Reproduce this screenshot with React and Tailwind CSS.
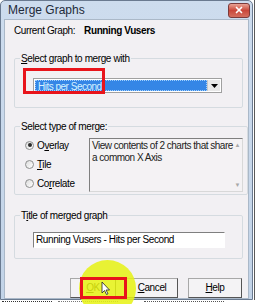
import { X } from "lucide-react";

function Radio({ checked, label }) {
    return (
        <label className="flex items-center gap-[3px] h-[14px]">
            <span className="w-[9px] h-[9px] rounded-full border border-[#8e8f8f] bg-gradient-to-br from-[#dcdcdc] to-white flex items-center justify-center">
                {checked && <span className="w-[4px] h-[4px] rounded-full bg-[#2b2b2b]" />}
            </span>
            <span>{label}</span>
        </label>
    );
}

function Button({ children }) {
    return (
        <button className="h-[20px] border border-[#a8a8a8] border-r-[#555] border-b-[#555] bg-[#f4f3f5] text-[10px] leading-none">
            {children}
        </button>
    );
}

export default function App() {
    return (
        <div
            className="relative w-[257px] h-[304px] overflow-hidden bg-white text-[10px] tracking-[-0.4px] text-black"
            style={{ fontFamily: '"Liberation Sans", Arial, sans-serif' }}
        >
            <div className="flex">
                {/* Window */}
                <div className="w-[253px] h-[300px] border border-[#6a7a90] rounded-t-[5px] bg-gradient-to-b from-[#cddcee] to-[#c2d3e7] flex flex-col">
                    <div className="h-[20px] flex items-center justify-between pl-[7px] pr-[2px]">
                        <span className="text-[12px] tracking-normal text-[#1e2a3a]">Merge Graphs</span>
                        <span className="w-[22px] h-[15px] rounded-[3px] border border-[#7b3a3a] bg-gradient-to-b from-[#e8a295] via-[#c9463a] to-[#d46e5e] flex items-center justify-center">
                            <X className="w-[10px] h-[10px] text-white" strokeWidth={4} />
                        </span>
                    </div>
                    <div className="flex-1 mx-[3px] mb-[3px] border border-[#aab8c8] bg-[#f2f0f3] flex flex-col pl-[9px] pr-[5px]">
                        <div className="pt-[4px] flex gap-[9px] leading-[13px]">
                            <span>Current Graph:</span>
                            <span className="font-bold">Running Vusers</span>
                        </div>

                        <fieldset className="mt-[15px] border border-[#d5dbe0] rounded-[2px]">
                            <legend className="ml-[5px] px-[1px] leading-[13px]">
                                <span className="underline">S</span>elect graph to merge with
                            </legend>
                            <div className="pt-[13px] pb-[14px] pl-[18px] pr-[20px]">
                                <div className="h-[15px] border border-[#a0a0a0] bg-white flex p-[1px]">
                                    <div className="flex-1 bg-[#3586e6] text-[#d6f2ff] leading-[11px] pl-[2px] tracking-[-0.5px] border border-dotted border-[#9fd0ff]">
                                        Hits per Second
                                    </div>
                                    <div className="w-[13px] bg-[#e8e8e8] border-l border-[#c8c8c8] flex items-center justify-center">
                                        <svg width="7" height="4" viewBox="0 0 7 4">
                                            <path d="M0 0H7L3.5 4Z" fill="#000" />
                                        </svg>
                                    </div>
                                </div>
                            </div>
                        </fieldset>

                        <fieldset className="mt-[12px] border border-[#d5dbe0] rounded-[2px]">
                            <legend className="ml-[5px] px-[1px] leading-[13px]">Select type of merge:</legend>
                            <div className="pt-[5px] pb-[2px] pl-[10px] pr-[4px] flex gap-[13px]">
                                <div className="w-[51px] h-[54px] flex flex-col gap-[5px]">
                                    <Radio checked label={<>O<span className="underline">v</span>erlay</>} />
                                    <Radio label={<><span className="underline">T</span>ile</>} />
                                    <Radio label={<>Co<span className="underline">r</span>relate</>} />
                                </div>
                                <div className="flex-1 h-[54px] border border-[#7f7f7f] border-r-[#d8d8d8] border-b-[#d8d8d8] bg-[#f4f2f4] flex">
                                    <div className="flex-1 pl-[2px] pt-[1px] leading-[12px] text-[#222] whitespace-nowrap tracking-[-0.5px]">
                                        View contents of 2 charts that share
                                        <br />a common X Axis
                                    </div>
                                    <div className="w-[9px] flex flex-col justify-between items-center py-[3px] text-[#a8a8a8] text-[6px] leading-none">
                                        <span>▲</span>
                                        <span>▼</span>
                                    </div>
                                </div>
                            </div>
                        </fieldset>

                        <fieldset className="mt-[14px] border border-[#d5dbe0] rounded-[2px]">
                            <legend className="ml-[5px] px-[1px] leading-[13px]">
                                T<span className="underline">i</span>tle of merged graph
                            </legend>
                            <div className="pt-[10px] pb-[10px] pl-[18px] pr-[17px]">
                                <div className="h-[16px] border border-[#7f7f7f] border-r-white border-b-white bg-white pl-[2px] leading-[14px]">
                                    Running Vusers - Hits per Second
                                </div>
                            </div>
                        </fieldset>

                        <div className="mt-[19px] flex gap-[10px] justify-end pr-[1px]">
                            <div className="w-[46px] flex flex-col"><Button><span className="underline">O</span>K</Button></div>
                            <div className="w-[52px] flex flex-col"><Button><span className="underline">C</span>ancel</Button></div>
                            <div className="w-[54px] flex flex-col"><Button><span className="underline">H</span>elp</Button></div>
                        </div>
                    </div>
                </div>
                {/* background to the right */}
                <div className="w-[4px] flex">
                    <div className="w-[1px] ml-[1px] bg-[#5a5a5a]" />
                </div>
            </div>
            {/* background below */}
            <div className="h-[4px] flex items-center gap-[6px] pl-[2px]">
                <div className="w-[50px] h-[2px] border-t border-dotted border-[#333]" />
                <div className="w-[60px] h-[2px] border-t border-dotted border-[#777]" />
                <div className="w-[80px] h-[2px] ml-[20px] border-t border-dotted border-[#555]" />
            </div>

            {/* tutorial highlights */}
            <div className="absolute left-[23px] top-[68px] w-[82px] h-[26px] border-[3px] border-[#e8141b]" />
            <div className="absolute left-[79px] top-[260px] w-[57px] h-[57px] rounded-full bg-[#e6f212]/85" />
            <div className="absolute left-[80px] top-[277px] w-[47px] h-[22px] border-[3px] border-[#e8141b]" />
            <svg className="absolute left-[101px] top-[281px]" width="9" height="14" viewBox="0 0 9 14">
                <path d="M1 1V12L3.5 9.5L5.5 13.5L7 12.8L5 9H8.5Z" fill="#fff" stroke="#222" strokeWidth="0.8" />
            </svg>
        </div>
    );
}
